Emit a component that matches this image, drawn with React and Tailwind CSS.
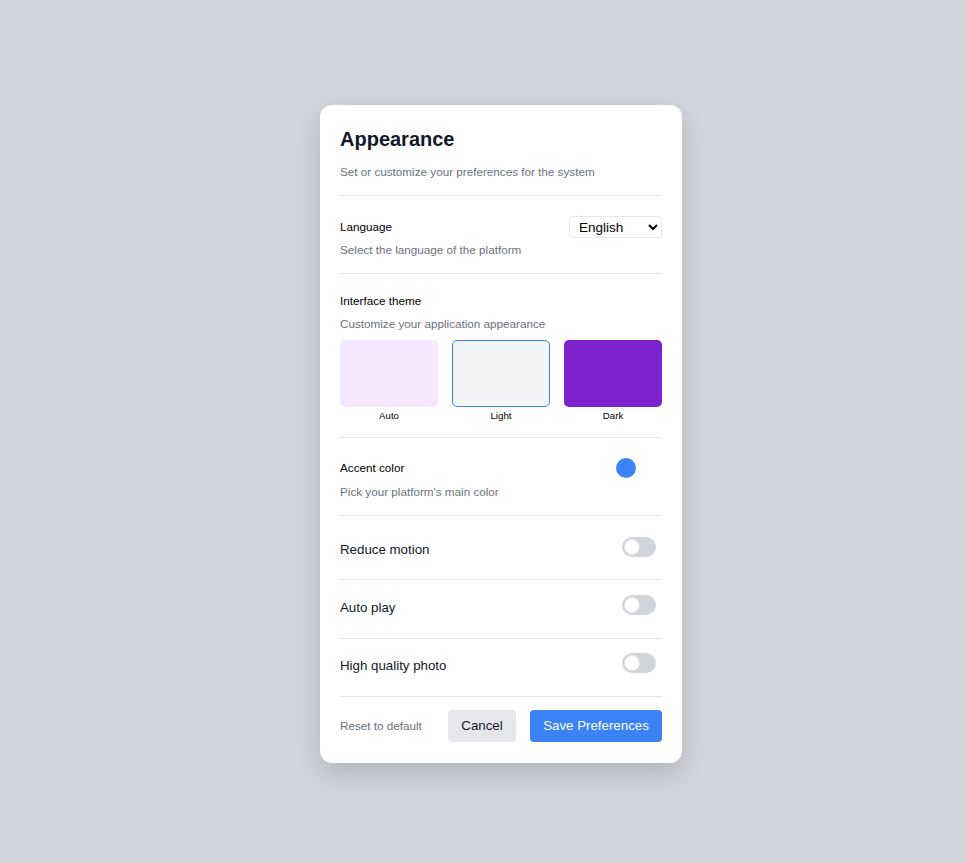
import { useState } from 'react';

const Toggle = ({ on, onChange }) => (
    <button
        onClick={onChange}
        className={`relative w-[34px] h-[20px] rounded-full shrink-0 mt-[-3px] ${on ? 'bg-[#3b82f6]' : 'bg-[#d1d5db]'}`}
    >
        <span
            className={`absolute top-[2px] w-[16px] h-[16px] rounded-full bg-white border border-[#e5e7eb] ${on ? 'left-[16px]' : 'left-[2px]'}`}
        />
    </button>
);

const THEMES = [
    { name: 'Auto', color: 'bg-[#f3e8ff]' },
    { name: 'Light', color: 'bg-[#f3f4f6]' },
    { name: 'Dark', color: 'bg-[#7e22ce]' },
];

export default function App() {
    const [theme, setTheme] = useState('Light');
    const [toggles, setToggles] = useState({ motion: false, autoplay: false, hq: false });

    const flip = (k) => setToggles((t) => ({ ...t, [k]: !t[k] }));

    const rows = [
        { key: 'motion', label: 'Reduce motion', pad: 'pt-[24px] pb-[19px]' },
        { key: 'autoplay', label: 'Auto play', pad: 'pt-[18px] pb-[20px]' },
        { key: 'hq', label: 'High quality photo', pad: 'pt-[17px] pb-[20px]' },
    ];

    return (
        <div className="min-h-screen w-full bg-[#d1d5db] flex justify-center pt-[105px] pl-[36px] font-['Liberation_Sans',Arial,sans-serif]">
            <div className="w-[362px] h-[658px] bg-white rounded-[12px] shadow-[0_10px_25px_rgba(0,0,0,0.15)] p-5">
                {/* Header */}
                <div className="border-b border-[#e5e7eb] pb-[15px]">
                    <h1 className="text-[20px] leading-[28px] font-bold text-[#111827]">Appearance</h1>
                    <p className="text-[11.7px] leading-[16px] text-[#6b7280] mt-[11px]">Set or customize your preferences for the system</p>
                </div>

                {/* Language */}
                <div className="border-b border-[#e5e7eb] pt-5 pb-[15px]">
                    <div className="flex items-center justify-between h-[22px]">
                        <span className="text-[11.7px] leading-[16px] text-black">Language</span>
                        <select className="w-[93px] h-[22px] border border-[#e5e7eb] rounded-[4px] text-[13.5px] text-black pl-[5px] pr-[2px] bg-white">
                            <option>English</option>
                            <option>Français</option>
                            <option>Deutsch</option>
                        </select>
                    </div>
                    <p className="text-[11.7px] leading-[16px] text-[#6b7280] mt-1">Select the language of the platform</p>
                </div>

                {/* Interface theme */}
                <div className="border-b border-[#e5e7eb] pt-[19px] pb-[14px]">
                    <p className="text-[11.7px] leading-[16px] text-black">Interface theme</p>
                    <p className="text-[11.7px] leading-[16px] text-[#6b7280] mt-[7px]">Customize your application appearance</p>
                    <div className="grid grid-cols-3 gap-[14px] mt-2">
                        {THEMES.map((t) => (
                            <button key={t.name} onClick={() => setTheme(t.name)} className="flex flex-col items-center">
                                <div
                                    className={`w-full h-[67px] rounded-[5px] ${t.color} ${theme === t.name ? 'border border-[#3b82f6]' : ''}`}
                                />
                                <span className="text-[9.7px] leading-[14px] text-black mt-[2px]">{t.name}</span>
                            </button>
                        ))}
                    </div>
                </div>

                {/* Accent color */}
                <div className="border-b border-[#e5e7eb] pt-5 pb-[15px]">
                    <div className="flex items-center justify-between h-[20px]">
                        <span className="text-[11.7px] leading-[16px] text-black">Accent color</span>
                        <span className="w-[20px] h-[20px] rounded-full bg-[#3b82f6] mr-[26px]" />
                    </div>
                    <p className="text-[11.7px] leading-[16px] text-[#6b7280] mt-[6px]">Pick your platform's main color</p>
                </div>

                {/* Toggles */}
                {rows.map((r) => (
                    <div key={r.key} className={`flex items-start justify-between border-b border-[#e5e7eb] pr-[6px] ${r.pad}`}>
                        <span className="text-[13.3px] leading-[20px] text-[#111827]">{r.label}</span>
                        <Toggle on={toggles[r.key]} onChange={() => flip(r.key)} />
                    </div>
                ))}

                {/* Footer */}
                <div className="flex items-center justify-between pt-[13px]">
                    <button className="text-[11.7px] leading-[16px] text-[#6b7280]">Reset to default</button>
                    <div className="flex items-center gap-[14px]">
                        <button className="w-[68px] h-[32px] rounded-[4px] bg-[#e5e7eb] text-[13.3px] text-[#111827]">Cancel</button>
                        <button className="w-[132px] h-[32px] rounded-[4px] bg-[#3b82f6] text-[13.3px] text-white">Save Preferences</button>
                    </div>
                </div>
            </div>
        </div>
    );
}
